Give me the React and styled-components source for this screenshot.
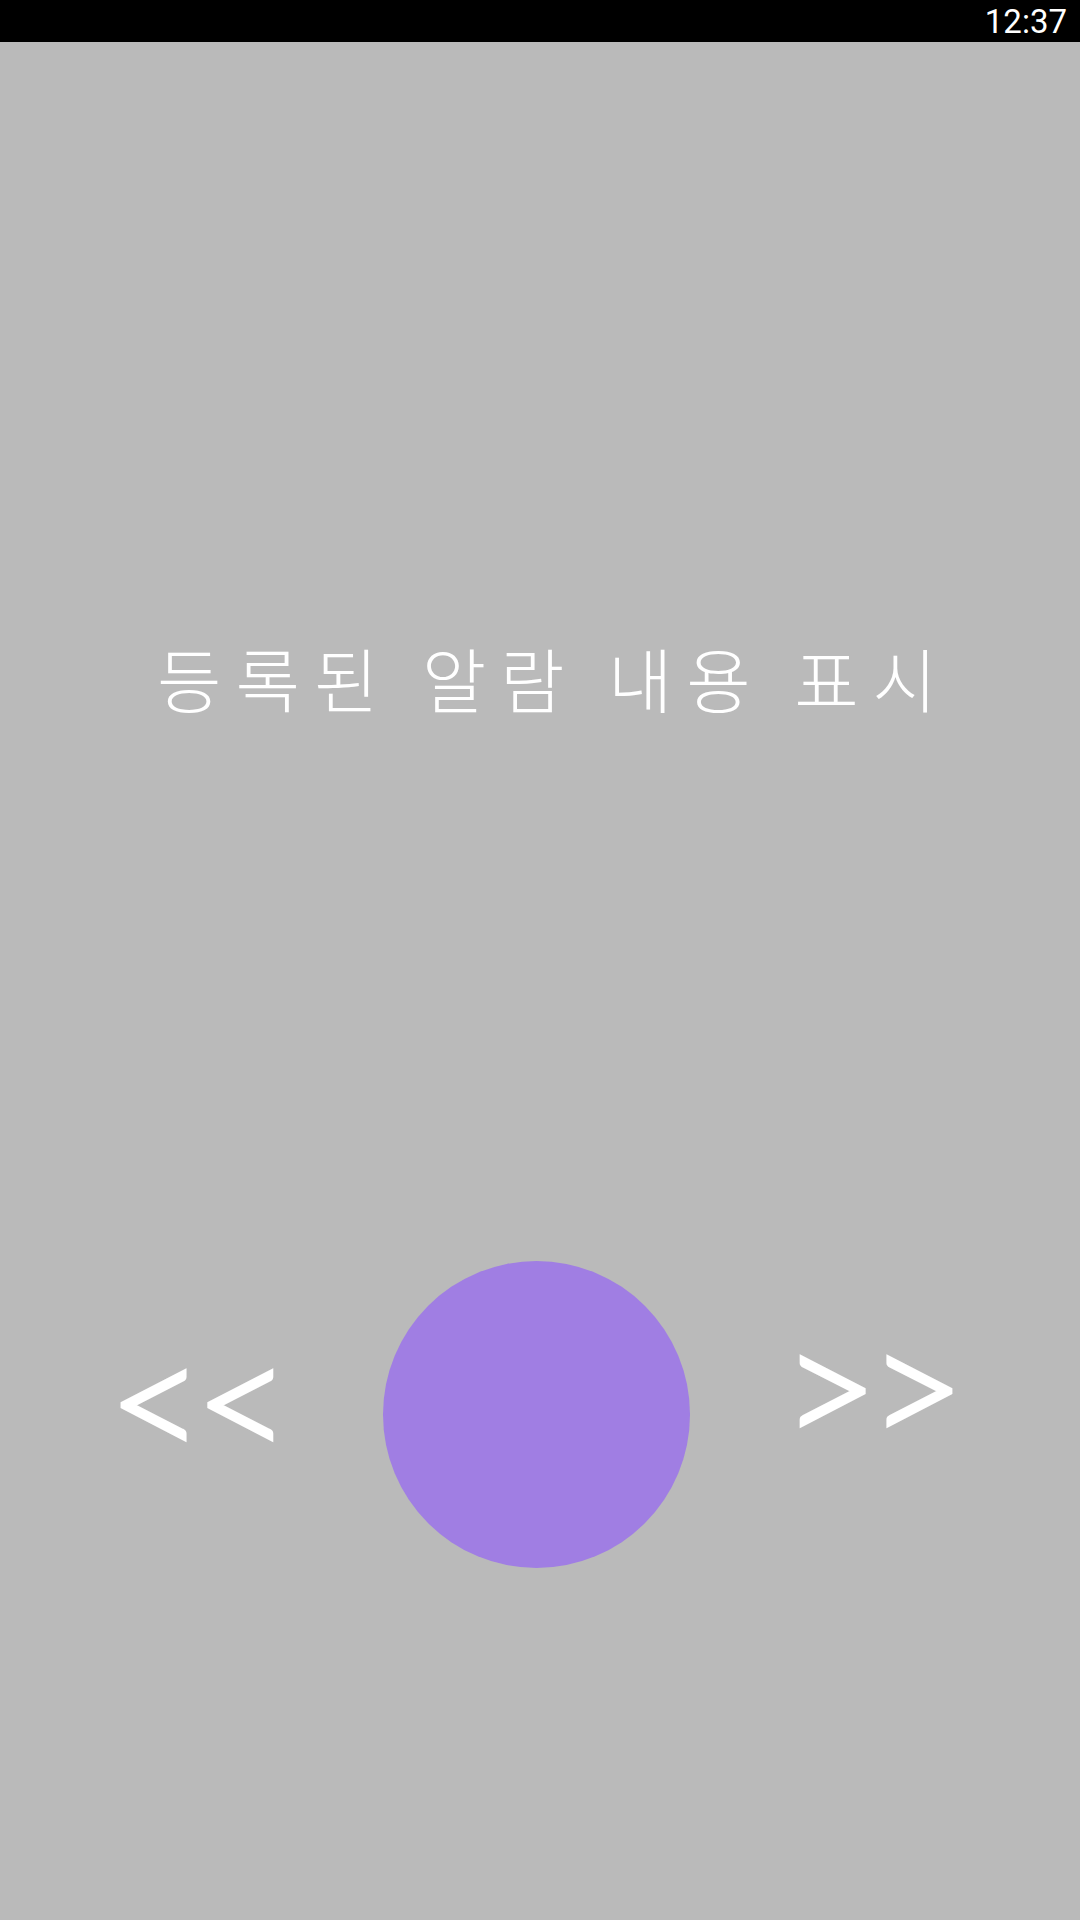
import React from 'react';
import styled, { createGlobalStyle } from 'styled-components';

const GlobalStyle = createGlobalStyle`
  html, body {
    margin: 0;
    padding: 0;
    background: #bababa;
  }
  body {
    font-family: "Noto Sans CJK KR", "Noto Sans", sans-serif;
  }
`;

const Screen = styled.div`
  width: 1080px;
  height: 1920px;
  display: flex;
  flex-direction: column;
  background: #bababa;
  overflow: hidden;
`;

const StatusBar = styled.div`
  height: 42px;
  flex-shrink: 0;
  background: #000;
  display: flex;
  align-items: center;
  justify-content: flex-end;
  padding-right: 13px;
  box-sizing: border-box;
`;

const Clock = styled.span`
  font-family: Roboto, "Liberation Sans", sans-serif;
  font-size: 33px;
  line-height: 1;
  color: #fff;
`;

const Message = styled.div`
  margin-top: 598px;
  height: 76px;
  padding-left: 28px;
  text-align: center;
  font-size: 70px;
  line-height: 76px;
  font-weight: 300;
  letter-spacing: 14px;
  color: #fff;
  white-space: nowrap;
`;

const Controls = styled.div`
  margin-top: 545px;
  height: 307px;
  display: grid;
  grid-template-columns: 376px 307px 358px;
  padding-left: 7px;
`;

const Arrow = styled.button`
  justify-self: center;
  align-self: start;
  margin-top: ${p => p.$top}px;
  height: 120px;
  padding: 0;
  border: none;
  background: none;
  font-family: Lato, "Noto Sans", sans-serif;
  font-size: 165px;
  font-weight: 300;
  line-height: 120px;
  letter-spacing: -9px;
  color: #fff;
  -webkit-text-stroke: 4px #fff;
  paint-order: stroke fill;
  stroke-linejoin: round;
`;

const RecordButton = styled.button`
  width: 307px;
  height: 307px;
  padding: 0;
  border: none;
  border-radius: 50%;
  background: #a07ee3;
`;

export default function App() {
  return (
    <Screen>
      <GlobalStyle />
      <StatusBar>
        <Clock>12:37</Clock>
      </StatusBar>
      <Message>등록된 알람 내용 표시</Message>
      <Controls>
        <Arrow $top={76}>&lt;&lt;</Arrow>
        <RecordButton aria-label="record" />
        <Arrow $top={62}>&gt;&gt;</Arrow>
      </Controls>
    </Screen>
  );
}
